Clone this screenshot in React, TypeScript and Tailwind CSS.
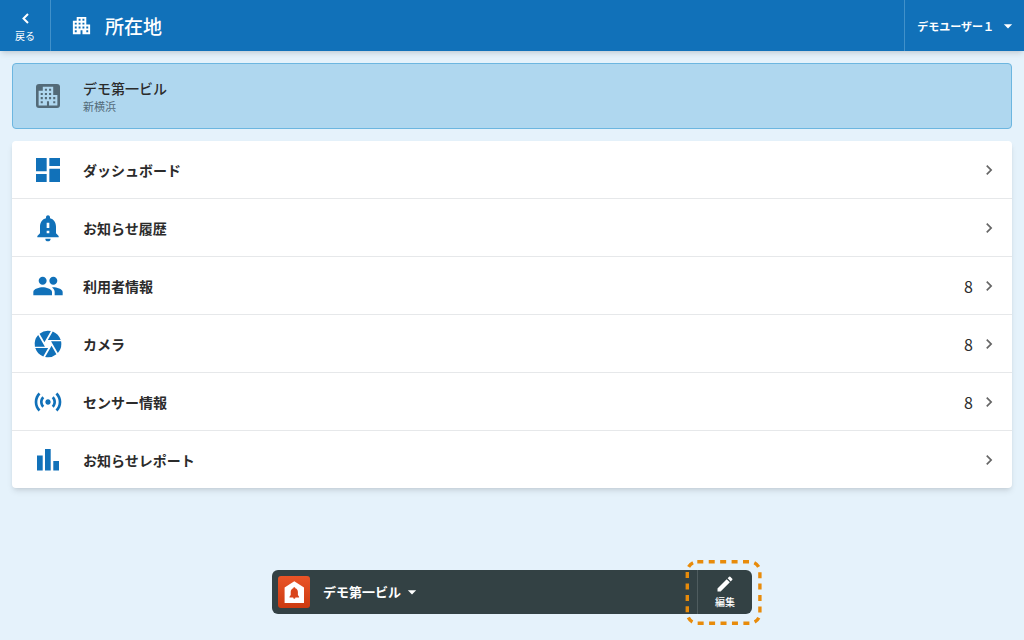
import React, { useState } from 'react';
import {
  MdApartment,
  MdArrowDropDown,
  MdCamera,
  MdChevronRight,
  MdDashboard,
  MdEdit,
  MdNotificationImportant,
  MdPeople,
  MdSensors,
} from 'react-icons/md';

interface MenuItem {
  id: string;
  label: string;
  icon: React.ReactNode;
  count?: number;
}

const BackIcon: React.FC = () => (
  <svg className="w-5 h-5" viewBox="0 0 20 20" fill="none" stroke="currentColor" strokeWidth={2} aria-hidden="true">
    <path d="M13 6l-4.500 4.500L13 15" />
  </svg>
);

const BarsIcon: React.FC = () => (
  <svg className="w-8 h-8" viewBox="0 0 32 32" fill="currentColor" aria-hidden="true">
    <path d="M5 11.500h5.700v15H5zM13 5h5.700v21.500H13zM21.300 17H27v9.500h-5.700z" />
  </svg>
);

const BuildingIcon: React.FC = () => (
  <svg className="w-8 h-8" viewBox="0 0 32 32" aria-hidden="true">
    <rect x="4" y="4" width="24" height="24" rx="3" fill="#536a78" />
    <MdApartment x={3.5} y={3.5} size={25} color="#afd7ef" />
  </svg>
);

const AppLogo: React.FC = () => (
  <svg className="w-8 h-8 shrink-0" viewBox="0 0 32 32" aria-hidden="true">
    <defs>
      <linearGradient id="logo-bg" x1="0" y1="0" x2="0" y2="1">
        <stop offset="0" stopColor="#ea5427" />
        <stop offset="1" stopColor="#cc3a10" />
      </linearGradient>
    </defs>
    <rect width="32" height="32" rx="3" fill="url(#logo-bg)" />
    <path d="M16.300 5.300l9.700 6.200V27H6.600V11.500z" fill="#fff" />
    <path
      d="M16.300 11.200c-.6 0-1 .4-1 1-1.700.5-2.600 1.900-2.600 3.900v3L11.500 20.700v.8h9.600v-.8l-1.200-1.600v-3c0-2-.9-3.400-2.600-3.900 0-.6-.4-1-1-1zM15.200 21.500a1.100 1.200 0 0 0 2.200 0z"
      fill="#d9441a"
    />
  </svg>
);

const items: MenuItem[] = [
  { id: 'dashboard', label: 'ダッシュボード', icon: <MdDashboard size={32} /> },
  { id: 'history', label: 'お知らせ履歴', icon: <MdNotificationImportant size={32} /> },
  { id: 'users', label: '利用者情報', icon: <MdPeople size={32} />, count: 8 },
  { id: 'cameras', label: 'カメラ', icon: <MdCamera size={32} />, count: 8 },
  { id: 'sensors', label: 'センサー情報', icon: <MdSensors size={32} />, count: 8 },
  { id: 'reports', label: 'お知らせレポート', icon: <BarsIcon /> },
];

const Header: React.FC = () => (
  <header className="relative flex h-[51px] bg-[#1171b9] text-white shadow-md">
    <button type="button" className="flex w-[51px] flex-col items-center justify-center border-r border-[#4191ca]">
      <BackIcon />
      <span className="text-[10px] leading-4">戻る</span>
    </button>
    <div className="flex flex-1 items-center gap-3 pl-[19px]">
      <MdApartment size={23} />
      <h1 className="text-[19px] leading-6 font-medium">所在地</h1>
    </div>
    <button type="button" className="flex items-center gap-1 border-l border-[#4191ca] pl-3 pr-1.5" aria-haspopup="menu">
      <span className="text-[11px] leading-4 font-bold">デモユーザー１</span>
      <MdArrowDropDown size={20} />
    </button>
  </header>
);

const BottomBar: React.FC = () => {
  const [place, setPlace] = useState('first');

  return (
    <div className="mx-auto mt-auto mb-[26px] flex h-11 w-full max-w-[480px] rounded-md bg-[#334144] text-white">
      <div className="flex flex-1 items-center pl-1.5">
        <AppLogo />
        <label className="ml-[13px] flex items-center">
          <select
            aria-label="所在地"
            value={place}
            onChange={(e) => setPlace(e.target.value)}
            className="appearance-none bg-transparent text-[13px] leading-5 font-bold"
          >
            <option value="first">デモ第一ビル</option>
          </select>
          <MdArrowDropDown size={20} className="pointer-events-none" />
        </label>
      </div>
      <div className="relative flex w-[55px] border-l border-[#4f5c5f]">
        <button type="button" className="flex w-full flex-col items-center justify-center">
          <MdEdit size={20} />
          <span className="text-[10px] leading-4 font-medium">編集</span>
        </button>
        {/* Highlight around the edit button */}
        <svg
          className="pointer-events-none absolute -top-[11px] -left-[13px] h-[66px] w-[78px]"
          viewBox="0 0 78 66"
          fill="none"
          aria-hidden="true"
        >
          <rect x="2.300" y="2.800" width="72.600" height="61.400" rx="10" stroke="#e88b0a" strokeWidth="3.400" strokeDasharray="6 5.430" />
        </svg>
      </div>
    </div>
  );
};

export default function App() {
  return (
    <div
      lang="ja"
      className="flex min-h-screen flex-col bg-[#e5f2fb] text-[#2b2b2b] font-['Noto_Sans_CJK_JP',sans-serif]"
    >
      <Header />
      <main className="flex flex-col gap-3 p-3">
        <section className="flex h-[66px] items-center rounded border border-[#6cb6e0] bg-[#afd7ef] pl-[19px]">
          <BuildingIcon />
          <div className="ml-[19px]">
            <h2 className="text-[14px] leading-5 font-medium">デモ第一ビル</h2>
            <p className="text-[11px] leading-4 text-[#536a78]">新横浜</p>
          </div>
        </section>
        <nav className="rounded bg-white shadow-md">
          <ul className="divide-y divide-[#e6e8ea]">
            {items.map((item) => (
              <li key={item.id}>
                <a href={`#${item.id}`} className="flex h-[57px] items-center pl-5 pr-[13px]">
                  <span className="text-[#1171b9]">{item.icon}</span>
                  <span className="ml-[19px] flex-1 text-[14px] leading-5 font-bold">{item.label}</span>
                  {item.count !== undefined && <span className="mr-1.5 text-[16px] leading-5">{item.count}</span>}
                  <MdChevronRight size={20} className="text-[#666]" />
                </a>
              </li>
            ))}
          </ul>
        </nav>
      </main>
      <BottomBar />
    </div>
  );
}
